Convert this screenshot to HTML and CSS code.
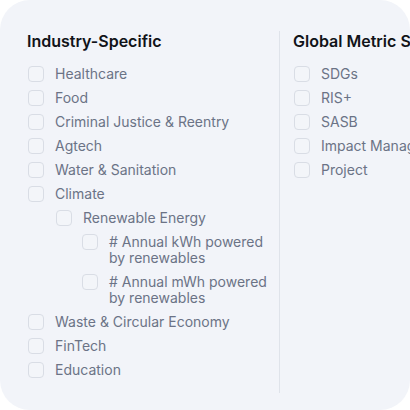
FILE: index.html
```html
<!DOCTYPE html>
<html>
<head>
<meta charset="utf-8">
<link rel="stylesheet" href="styles.css">
</head>
<body>
<div class="card">
  <div class="col col-left">
    <h2 class="title">Industry-Specific</h2>
    <ul class="list">
      <li class="item"><span class="box"></span><span class="label">Healthcare</span></li>
      <li class="item"><span class="box"></span><span class="label">Food</span></li>
      <li class="item"><span class="box"></span><span class="label">Criminal Justice &amp; Reentry</span></li>
      <li class="item"><span class="box"></span><span class="label">Agtech</span></li>
      <li class="item"><span class="box"></span><span class="label">Water &amp; Sanitation</span></li>
      <li class="item"><span class="box"></span><span class="label">Climate</span></li>
      <li class="item lvl1"><span class="box"></span><span class="label">Renewable Energy</span></li>
      <li class="item lvl2"><span class="box"></span><span class="label"># Annual kWh powered by renewables</span></li>
      <li class="item lvl2"><span class="box"></span><span class="label"># Annual mWh powered by renewables</span></li>
      <li class="item"><span class="box"></span><span class="label">Waste &amp; Circular Economy</span></li>
      <li class="item"><span class="box"></span><span class="label">FinTech</span></li>
      <li class="item"><span class="box"></span><span class="label">Education</span></li>
    </ul>
  </div>
  <div class="col col-right">
    <h2 class="title">Global Metric Sets</h2>
    <ul class="list">
      <li class="item"><span class="box"></span><span class="label">SDGs</span></li>
      <li class="item"><span class="box"></span><span class="label">RIS+</span></li>
      <li class="item"><span class="box"></span><span class="label">SASB</span></li>
      <li class="item"><span class="box"></span><span class="label">Impact Management Project</span></li>
      <li class="item"><span class="box"></span><span class="label">Project</span></li>
    </ul>
  </div>
</div>
</body>
</html>
```

FILE: styles.css
```css
html, body {
  margin: 0;
  padding: 0;
  background: #ffffff;
}

body {
  font-family: Inter, "Noto Sans", "Liberation Sans", sans-serif;
  width: 410px;
  height: 410px;
  overflow: hidden;
}

.card {
  box-sizing: border-box;
  width: 410px;
  height: 410px;
  background: #f2f4f9;
  border-radius: 30px;
  overflow: hidden;
  display: flex;
  padding: 31px 0 17px 27px;
}

.col {
  display: flex;
  flex-direction: column;
}

.col-left {
  width: 252px;
  flex: 0 0 252px;
}

.col-right {
  flex: 0 0 auto;
  border-left: 1px solid #dfe3ea;
  padding-left: 13px;
  white-space: nowrap;
}

.title {
  margin: 0 0 15px 0;
  font-size: 16px;
  line-height: 20px;
  font-weight: 600;
  color: #111318;
}

.list {
  list-style: none;
  margin: 0;
  padding: 0;
  display: flex;
  flex-direction: column;
  gap: 8px;
}

.item {
  display: flex;
  align-items: flex-start;
  gap: 11px;
  padding-left: 1px;
}

.item.lvl1 {
  padding-left: 29px;
}

.item.lvl2 {
  padding-left: 55px;
}

.box {
  flex: 0 0 auto;
  box-sizing: border-box;
  width: 16px;
  height: 16px;
  border: 1.5px solid #d9dde5;
  border-radius: 4px;
  background: #f3f5f9;
}

.label {
  font-size: 14px;
  line-height: 16px;
  color: #6b7386;
}
```
